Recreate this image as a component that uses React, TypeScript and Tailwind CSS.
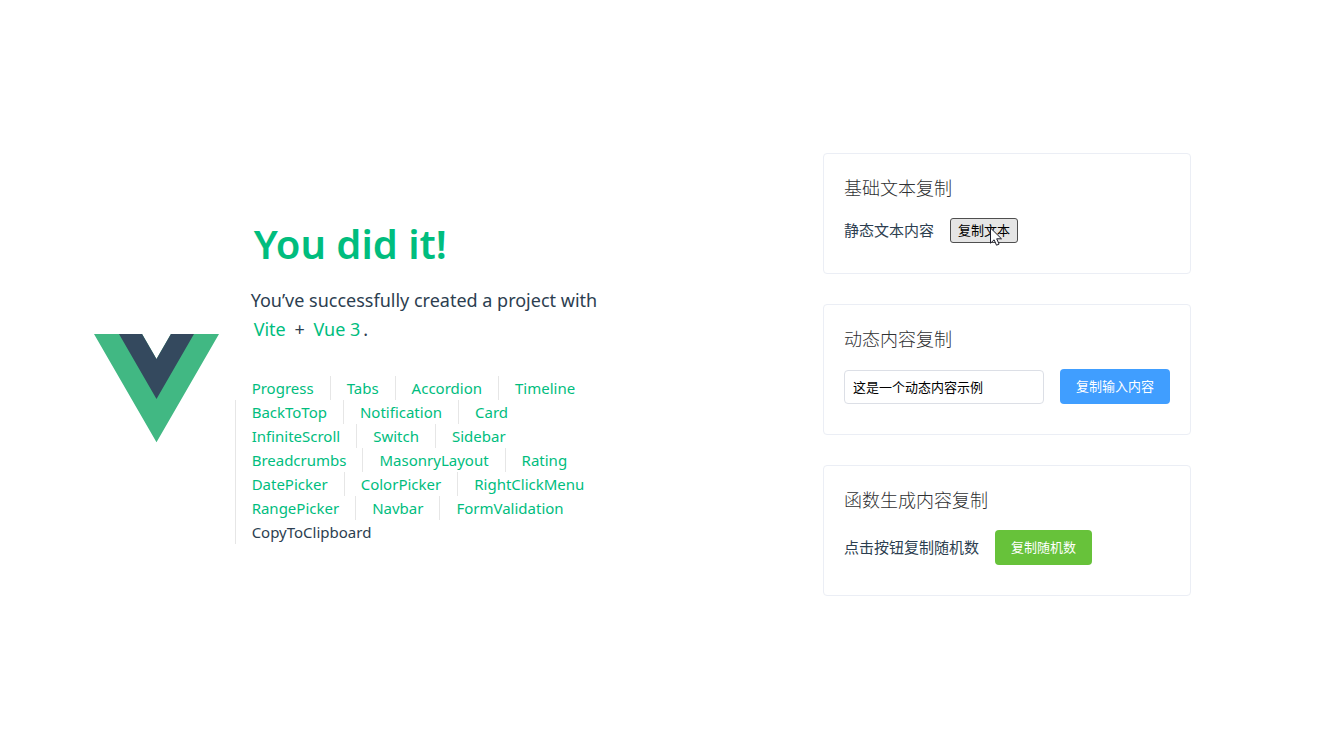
import React, { useState } from "react";

const navRows = [
  ["Progress", "Tabs", "Accordion", "Timeline"],
  ["BackToTop", "Notification", "Card"],
  ["InfiniteScroll", "Switch", "Sidebar"],
  ["Breadcrumbs", "MasonryLayout", "Rating"],
  ["DatePicker", "ColorPicker", "RightClickMenu"],
  ["RangePicker", "Navbar", "FormValidation"],
  ["CopyToClipboard"],
];

function VueLogo() {
  return (
    <svg viewBox="0 0 261.76 226.69" className="w-[125px] shrink-0" aria-hidden="true">
      <path fill="#41b883" d="M161.096.001l-30.225 52.351L100.647.001H-.005l130.877 226.688L261.749.001z" />
      <path fill="#34495e" d="M161.096.001l-30.225 52.351L100.647.001H52.346l78.526 136.01L209.398.001z" />
    </svg>
  );
}

function Pointer() {
  return (
    <svg viewBox="0 0 12 19" className="absolute top-[9px] left-10 w-3 h-[19px] pointer-events-none" aria-hidden="true">
      <path d="M.5 1v15.2l3.6-3.4 2.4 5.4 2.6-1.1-2.4-5.3h4.8z" fill="#fff" stroke="#1c1c2a" strokeWidth="1" />
    </svg>
  );
}

function Card({ title, children }: { title: string; children: React.ReactNode }) {
  return (
    <section className="border border-[#ebeef5] rounded px-5 pt-5 pb-[30px]">
      <h3 className="text-lg leading-7 font-light text-[#303133] mb-4">{title}</h3>
      <div className="flex items-center gap-4">{children}</div>
    </section>
  );
}

export default function App() {
  const [text, setText] = useState("这是一个动态内容示例");
  const [active, setActive] = useState("CopyToClipboard");

  const copy = (value: string) => {
    navigator.clipboard?.writeText(value);
  };

  return (
    <div className="min-h-screen max-w-7xl mx-auto px-8 grid grid-cols-2 bg-white text-[#2c3e50] text-[15px] font-['Noto_Sans','Noto_Sans_CJK_SC',sans-serif]">
      {/* Header */}
      <header className="flex items-center justify-center gap-8 pr-9 pt-7">
        <div className="pt-3 shrink-0">
          <VueLogo />
        </div>
        <div className="shrink-0">
          <h1 className="text-[40px] leading-11 font-semibold text-[#00bd7e] px-[3px] mb-5">You did it!</h1>
          <h3 className="text-[18px] leading-[29px] mb-8">
            You’ve successfully created a project with
            <br />
            <a href="#vite" className="text-[#00bd7e] px-[3px]">Vite</a>{" "}
            <span className="px-px">+</span>{" "}
            <a href="#vue" className="text-[#00bd7e] px-[3px]">Vue 3</a>.
          </h3>
          <nav className="-ml-4">
            {navRows.map((row, i) => (
              <div key={i} className="flex">
                {row.map((name, j) => (
                  <a
                    key={name}
                    href={`#${name}`}
                    onClick={() => setActive(name)}
                    className={`px-4 leading-6 border-l ${i + j === 0 ? "border-transparent" : "border-[#e6e6e6]"} ${
                      active === name ? "text-[#2c3e50]" : "text-[#00bd7e]"
                    }`}
                  >
                    {name}
                  </a>
                ))}
              </div>
            ))}
          </nav>
        </div>
      </header>

      {/* Copy examples */}
      <main className="flex items-center justify-center pl-17 pt-3">
        <div className="flex flex-col gap-[30px]">
          <Card title="基础文本复制">
            <span>静态文本内容</span>
            <div className="relative">
              <button
                onClick={() => copy("静态文本内容")}
                className="block border border-[#4f4f4f] rounded-[3px] bg-[#e5e5e5] text-black text-[13px] leading-[23px] px-[7px]"
              >
                复制文本
              </button>
              <Pointer />
            </div>
          </Card>
          <Card title="动态内容复制">
            <input
              aria-label="动态内容"
              value={text}
              onChange={(e) => setText(e.target.value)}
              className="w-[200px] h-[34px] border border-[#dcdfe6] rounded px-2 text-black text-[13px] outline-none"
            />
            <button onClick={() => copy(text)} className="h-[35px] px-4 rounded bg-[#409eff] text-white text-[13px]">
              复制输入内容
            </button>
          </Card>
          <Card title="函数生成内容复制">
            <span>点击按钮复制随机数</span>
            <button
              onClick={() => copy(String(Math.random()))}
              className="h-[35px] px-4 rounded bg-[#67c23a] text-white text-[13px]"
            >
              复制随机数
            </button>
          </Card>
        </div>
      </main>
    </div>
  );
}
